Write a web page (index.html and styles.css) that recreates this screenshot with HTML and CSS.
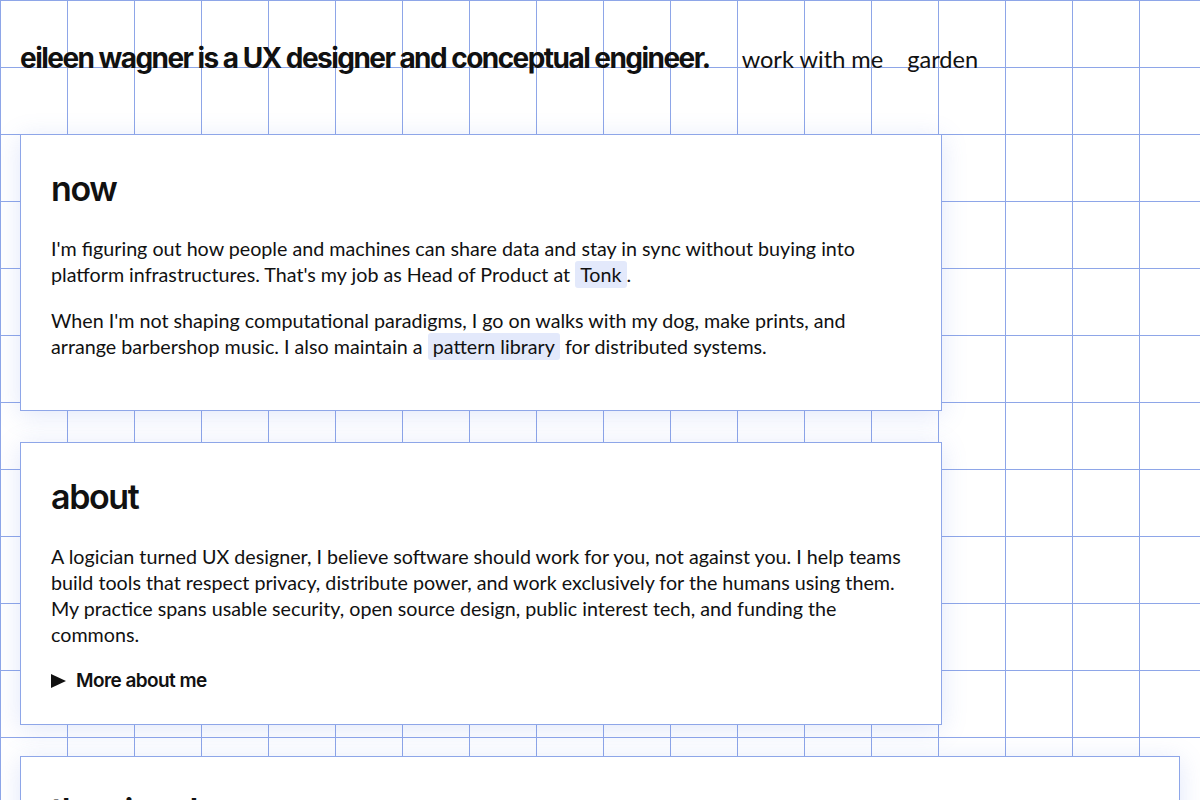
FILE: index.html
```html
<!DOCTYPE html>
<html lang="en">
<head>
  <meta charset="UTF-8" />
  <meta name="viewport" content="width=device-width, initial-scale=1.0"/>
  <title>eileen wagner</title>
  <link rel="stylesheet" href="styles.css">
</head>
<body>
  <header>
    <h1>eileen wagner is a UX designer and conceptual engineer.</h1>
    <nav>
      <a href="#">work with me</a>
      <a href="#">garden</a>
    </nav>
  </header>

  <main>
    <section class="card">
      <h2>now</h2>
      <p>I'm figuring out how people and machines can share data and stay in sync without buying into platform infrastructures. That's my job as Head of Product at <a class="mark" href="#">Tonk</a>.</p>
      <p>When I'm not shaping computational paradigms, I go on walks with my dog, make prints, and arrange barbershop music. I also maintain a <a class="mark" href="#">pattern library</a> for distributed systems.</p>
    </section>

    <section class="card">
      <h2>about</h2>
      <p>A logician turned UX designer, I believe software should work for you, not against you. I help teams build tools that respect privacy, distribute power, and work exclusively for the humans using them. My practice spans usable security, open source design, public interest tech, and funding the commons.</p>
      <details>
        <summary>More about me</summary>
        <p>I studied logic and philosophy before moving into design.</p>
      </details>
    </section>

    <section class="card wide">
      <h2>the signal</h2>
      <p>Selected talks, writing and projects.</p>
    </section>
  </main>
</body>
</html>
```

FILE: styles.css
```css
:root {
  --linha: #8ea6e8;
  --tinta: #111;
  --marca: #e3e9fb;
}
html {
  background-color: #fff;
  background-image:
    linear-gradient(to right, var(--linha) 1px, transparent 1px),
    linear-gradient(to bottom, var(--linha) 1px, transparent 1px);
  background-size: 67px 67px;
}
body {
  margin: 0;
  padding: 0 20px;
  color: var(--tinta);
  font-family: Lato, "Noto Sans", sans-serif;
  font-size: 19.7px;
  line-height: 26px;
}
header {
  height: 134px;
  display: flex;
  align-items: baseline;
  gap: 32px;
  padding-top: 40px;
  box-sizing: border-box;
}
header h1 {
  margin: 0;
  font-family: Inter, sans-serif;
  font-size: 28px;
  font-weight: 700;
  letter-spacing: -0.055em;
  line-height: 36px;
}
nav {
  display: flex;
  gap: 24px;
}
nav a {
  color: var(--tinta);
  text-decoration: none;
  font-size: 23.6px;
  font-weight: 400;
}
main {
  display: flex;
  flex-direction: column;
  align-items: flex-start;
  gap: 31px;
}
.card {
  width: 922px;
  box-sizing: border-box;
  background: #fff;
  border: 1px solid var(--linha);
  padding: 30px;
  box-shadow: 0 4px 24px rgba(90, 120, 230, 0.18);
}
.card.wide {
  width: 1160px;
}
.card h2 {
  margin: 0 0 23px;
  font-family: Inter, sans-serif;
  font-size: 34px;
  font-weight: 600;
  letter-spacing: -0.04em;
  line-height: 48px;
}
.card p {
  margin: 0 0 20px;
}
.mark {
  color: var(--tinta);
  text-decoration: none;
  background: var(--marca);
  padding: 2px 5px;
  border-radius: 3px;
}
summary {
  list-style: none;
  font-family: Inter, sans-serif;
  font-size: 19px;
  font-weight: 600;
  letter-spacing: -0.03em;
  cursor: pointer;
}
summary::-webkit-details-marker {
  display: none;
}
summary::before {
  content: "";
  display: inline-block;
  border-left: 15px solid var(--tinta);
  border-top: 7px solid transparent;
  border-bottom: 7px solid transparent;
  margin-right: 10px;
  vertical-align: -1px;
}
details p {
  margin-top: 12px;
}
```
